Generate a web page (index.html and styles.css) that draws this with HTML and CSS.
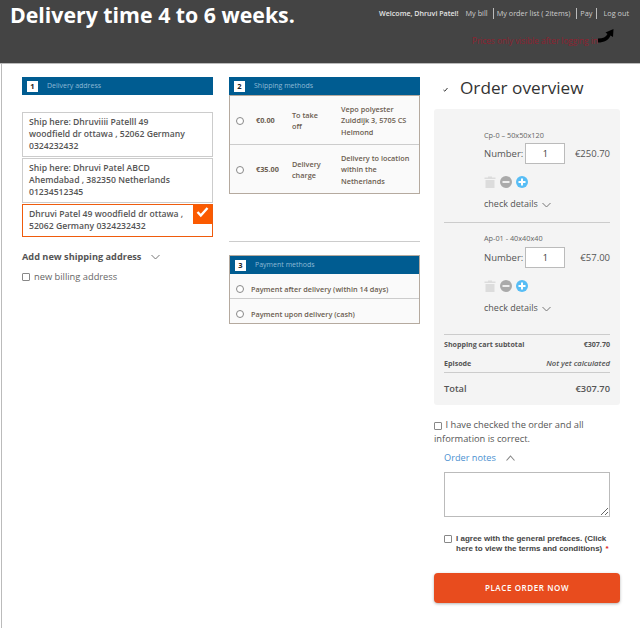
FILE: index.html
```html
<!DOCTYPE html>
<html lang="en">
<head>
    <meta charset="UTF-8">
    <title>Checkout</title>
    <link rel="stylesheet" href="styles.css">
</head>
<body>
<header class="topbar">
    <h1 class="delivery-time">Delivery time 4 to 6 weeks.</h1>
    <div class="topbar-right">
        <nav class="user-nav">
            <span class="welcome">Welcome, Dhruvi Patel!</span>
            <a class="nav-first">My bill</a>
            <a class="nav-sep">My order list ( 2items)</a>
            <a class="nav-sep nav-pay">Pay</a>
            <a class="nav-sep nav-out">Log out</a>
        </nav>
        <div class="price-note">
            <span>Prices only visible after logging in</span>
            <svg class="arrow" width="16" height="14" viewBox="0 0 16 14"><path d="M0 9.500C5 9.500 8 8 9.500 5L7.500 3.500L15.500 0L15 8L12.500 6.500C11 11 6 13.500 0 13.500Z" fill="#000"/></svg>
        </div>
    </div>
</header>

<main class="page">
    <section class="col col-address">
        <div class="step-head"><span class="step-num">1</span>Delivery address</div>
        <div class="address-list">
            <div class="address">Ship here: Dhruviiii Patelll 49<br>woodfield dr ottawa , 52062 Germany<br>0324232432</div>
            <div class="address">Ship here: Dhruvi Patel ABCD<br>Ahemdabad , 382350 Netherlands<br>01234512345</div>
            <div class="address address-active">Dhruvi Patel 49 woodfield dr ottawa ,<br>52062 Germany 0324232432
                <span class="address-check">
                    <svg width="13" height="11" viewBox="0 0 13 11"><path d="M1.500 5L4.800 8.500L11.500 1" fill="none" stroke="#fff" stroke-width="2.400"/></svg>
                </span>
            </div>
        </div>
        <div class="add-new">Add new shipping address
            <svg class="chev" width="9" height="6" viewBox="0 0 9 6"><path d="M.5 1L4.500 5L8.500 1" fill="none" stroke="#777"/></svg>
        </div>
        <label class="billing"><span class="box"></span>new billing address</label>
    </section>

    <section class="col col-methods">
        <div class="step-head"><span class="step-num">2</span>Shipping methods</div>
        <div class="ship-box">
            <div class="ship-row">
                <span class="radio"></span>
                <span class="ship-price">€0.00</span>
                <span class="ship-name">To take<br>off</span>
                <span class="ship-desc">Vepo polyester Zuiddijk 3, 5705 CS Helmond</span>
            </div>
            <div class="ship-row">
                <span class="radio"></span>
                <span class="ship-price">€35.00</span>
                <span class="ship-name">Delivery<br>charge</span>
                <span class="ship-desc">Delivery to location within the Netherlands</span>
            </div>
        </div>
        <hr class="methods-rule">
        <div class="pay-box">
            <div class="step-head"><span class="step-num">3</span>Payment methods</div>
            <div class="pay-row"><span class="radio"></span>Payment after delivery (within 14 days)</div>
            <div class="pay-row"><span class="radio"></span>Payment upon delivery (cash)</div>
        </div>
    </section>

    <section class="col col-order">
        <h2 class="order-title">
            <svg class="order-tick" width="5" height="5" viewBox="0 0 5 5"><path d="M.5 3L1.800 4.200L4.500 1" fill="none" stroke="#333"/></svg>
            Order overview
        </h2>
        <div class="order-panel">
            <div class="item">
                <div class="item-code">Cp-0 – 50x50x120</div>
                <div class="item-line">
                    <span>Number:</span>
                    <span class="qty">1</span>
                    <span class="item-price">€250.70</span>
                </div>
                <div class="item-icons">
                    <svg width="12" height="12" viewBox="0 0 12 12"><path d="M4 1.500V.5H8V1.500H11.500V3H.5V1.500ZM1.500 4H10.500V12H1.500Z" fill="#dcdcdc"/></svg>
                    <svg width="12" height="12" viewBox="0 0 12 12"><circle cx="6" cy="6" r="6" fill="#aaa"/><rect x="2.500" y="5" width="7" height="2" fill="#eee"/></svg>
                    <svg width="12" height="12" viewBox="0 0 12 12"><circle cx="6" cy="6" r="6" fill="#57bdf5"/><path d="M2.500 5H5V2.500H7V5H9.500V7H7V9.500H5V7H2.500Z" fill="#fff"/></svg>
                </div>
                <div class="item-details">check details
                    <svg class="chev" width="9" height="6" viewBox="0 0 9 6"><path d="M.5 1L4.500 5L8.500 1" fill="none" stroke="#777"/></svg>
                </div>
            </div>
            <div class="item item-last">
                <div class="item-code">Ap-01 - 40x40x40</div>
                <div class="item-line">
                    <span>Number:</span>
                    <span class="qty">1</span>
                    <span class="item-price">€57.00</span>
                </div>
                <div class="item-icons">
                    <svg width="12" height="12" viewBox="0 0 12 12"><path d="M4 1.500V.5H8V1.500H11.500V3H.5V1.500ZM1.500 4H10.500V12H1.500Z" fill="#dcdcdc"/></svg>
                    <svg width="12" height="12" viewBox="0 0 12 12"><circle cx="6" cy="6" r="6" fill="#aaa"/><rect x="2.500" y="5" width="7" height="2" fill="#eee"/></svg>
                    <svg width="12" height="12" viewBox="0 0 12 12"><circle cx="6" cy="6" r="6" fill="#57bdf5"/><path d="M2.500 5H5V2.500H7V5H9.500V7H7V9.500H5V7H2.500Z" fill="#fff"/></svg>
                </div>
                <div class="item-details">check details
                    <svg class="chev" width="9" height="6" viewBox="0 0 9 6"><path d="M.5 1L4.500 5L8.500 1" fill="none" stroke="#777"/></svg>
                </div>
            </div>
            <div class="totals">
                <div class="total-row"><b>Shopping cart subtotal</b><b>€307.70</b></div>
                <div class="total-row"><b>Episode</b><em>Not yet calculated</em></div>
            </div>
            <div class="grand-total"><span>Total</span><span>€307.70</span></div>
        </div>

        <label class="confirm"><span class="box box-inline"></span> I have checked the order and all information is correct.</label>
        <div class="notes-toggle">Order notes
            <svg width="9" height="6" viewBox="0 0 9 6"><path d="M.5 5.500L4.500 1L8.500 5.500" fill="none" stroke="#888" stroke-width="1.100"/></svg>
        </div>
        <textarea class="notes"></textarea>
        <label class="agree"><span class="box"></span><span>I agree with the general prefaces. (Click here to view the terms and conditions) <i>*</i></span></label>
        <button class="place-order">PLACE ORDER NOW</button>
    </section>
</main>
</body>
</html>
```

FILE: styles.css
```css
* {
    box-sizing: border-box;
}
html, body {
    height: 100%;
}
body {
    margin: 0;
    font-family: "Open Sans", Arial, sans-serif;
    color: #444;
    background-color: #fff;
    overflow: hidden;
}
.topbar {
    height: 64px;
    background-color: #444;
    border-bottom: 1px solid #bbb;
    display: flex;
    justify-content: space-between;
    padding: 0 11px 0 10px;
}
.delivery-time {
    margin: 0;
    font-size: 21.300px;
    line-height: 30px;
    font-weight: 700;
    color: #fff;
}
.topbar-right {
    display: flex;
    flex-direction: column;
    align-items: flex-end;
}
.user-nav {
    display: flex;
    margin-top: 8px;
    font-size: 7.300px;
    line-height: 11px;
    color: #ccc;
    white-space: nowrap;
}
.welcome {
    color: #e4e4e4;
    font-size: 7.100px;
    font-weight: 600;
    margin-right: 7px;
}
.nav-sep {
    border-left: 1px solid #bbb;
    padding-left: 3px;
    margin-left: 5px;
}
.nav-pay {
    margin-left: 6px;
}
.nav-out {
    margin-left: 4px;
    padding-left: 6px;
}
.price-note {
    display: flex;
    align-items: flex-end;
    margin-top: 10px;
    margin-right: 15px;
    font-size: 8.200px;
    line-height: 11px;
    color: #8e2230;
    white-space: nowrap;
}
.arrow {
    margin-bottom: 3px;
}
.page {
    height: 564px;
    display: flex;
    margin-left: 1px;
    border-left: 1px solid #bbb;
    padding: 13px 0 0 20px;
}
.col {
    width: 191px;
}
.col-methods {
    margin-left: 16px;
}
.col-order {
    margin-left: 14px;
    width: 186px;
}
.step-head {
    height: 18px;
    background-color: #005c91;
    color: #8dbad6;
    font-size: 7px;
    line-height: 18px;
    display: flex;
    align-items: center;
    padding-left: 5px;
}
.step-num {
    width: 11px;
    height: 11px;
    margin-right: 9px;
    background-color: #fff;
    color: #222;
    font-size: 7.500px;
    font-weight: 700;
    line-height: 11px;
    text-align: center;
}
.address-list {
    margin-top: 17px;
}
.address {
    position: relative;
    width: 191px;
    margin-bottom: 1px;
    padding: 3px 6px 4px 6px;
    border: 1px solid #ccc;
    font-size: 8.650px;
    font-weight: 600;
    line-height: 12px;
    color: #555;
}
.address-active {
    border-color: #ef5b0c;
}
.address-check {
    position: absolute;
    top: 0;
    right: 0;
    width: 19px;
    height: 19px;
    background-color: #fb5a00;
    display: flex;
    justify-content: center;
    padding-top: 2px;
}
.add-new {
    margin-top: 13px;
    font-size: 9.200px;
    font-weight: 700;
    line-height: 14px;
    color: #555;
    display: flex;
    align-items: center;
}
.add-new .chev {
    margin-left: 10px;
}
.billing {
    display: flex;
    align-items: center;
    margin-top: 6px;
    font-size: 9.300px;
    line-height: 13px;
    color: #666;
}
.box {
    flex: none;
    display: inline-block;
    width: 8px;
    height: 8px;
    margin-right: 4px;
    background-color: #fff;
    border: 1px solid #888;
    border-radius: 1px;
}
.ship-box {
    border: 1px solid #b5aa9f;
    background-color: #fafafa;
}
.ship-row {
    display: flex;
    align-items: center;
    height: 48px;
    padding: 2px 0 0 6px;
    font-size: 7.300px;
    font-weight: 600;
    line-height: 11.500px;
    color: #6b5d50;
}
.ship-row + .ship-row {
    height: 49px;
    border-top: 1px solid #ccc;
}
.radio {
    flex: none;
    width: 8px;
    height: 8px;
    border: 1px solid #888;
    border-radius: 50%;
    background-color: #fff;
}
.ship-price {
    width: 36px;
    margin-left: 12px;
    flex: none;
    font-weight: 700;
}
.ship-name {
    width: 49px;
    flex: none;
}
.ship-desc {
    flex: 1;
    padding-right: 6px;
}
.methods-rule {
    margin: 47px 0 13px;
    border: none;
    border-top: 1px solid #ccc;
}
.pay-box {
    border: 1px solid #b5aa9f;
    background-color: #fafafa;
}
.pay-row {
    display: flex;
    align-items: center;
    height: 24px;
    padding: 5px 0 0 6px;
    font-size: 7.300px;
    font-weight: 600;
    color: #6b5d50;
    white-space: nowrap;
}
.pay-row + .pay-row {
    height: 25px;
    border-top: 1px solid #ccc;
}
.pay-row .radio {
    margin-right: 7px;
}
.order-title {
    margin: 0;
    height: 32px;
    font-size: 17.200px;
    font-weight: 400;
    line-height: 22px;
    color: #333;
    display: flex;
    align-items: center;
    padding-bottom: 10px;
}
.order-tick {
    margin: 3px 12px 0 9px;
}
.order-panel {
    height: 296px;
    padding: 0 10px;
    background-color: #f4f4f4;
    border-radius: 3px;
}
.item {
    height: 114px;
    padding: 21px 0 0 40px;
    border-bottom: 1px solid #ccc;
}
.item-last {
    height: 112px;
    padding-top: 10px;
}
.item-last .item-line {
    margin-top: 4px;
}
.item-code {
    font-size: 7.300px;
    line-height: 10px;
    color: #666;
}
.item-line {
    display: flex;
    align-items: center;
    margin-top: 3px;
    font-size: 9.500px;
    color: #555;
}
.qty {
    width: 40px;
    height: 21px;
    margin-left: 2px;
    background-color: #fff;
    border: 1px solid #bbb;
    font-size: 9px;
    line-height: 19px;
    text-align: center;
    color: #333;
}
.item-price {
    margin-left: auto;
}
.item-icons {
    display: flex;
    align-items: center;
    gap: 4px;
    margin-top: 11px;
    height: 14px;
}
.item-details {
    margin-top: 8px;
    font-size: 9px;
    line-height: 14px;
    color: #555;
    display: flex;
    align-items: center;
}
.item-details .chev {
    margin-left: 4px;
    margin-top: 2px;
}
.totals {
    height: 38px;
    border-bottom: 1px solid #ccc;
    padding-top: 3px;
}
.total-row {
    display: flex;
    justify-content: space-between;
    height: 19px;
    font-size: 7.100px;
    line-height: 12px;
    color: #555;
}
.total-row em {
    font-size: 7.700px;
    font-weight: 600;
}
.grand-total {
    display: flex;
    justify-content: space-between;
    padding-top: 9px;
    font-size: 9.300px;
    font-weight: 600;
    line-height: 14px;
    color: #555;
}
.confirm {
    display: block;
    margin-top: 13px;
    font-size: 9.300px;
    line-height: 14px;
    color: #555;
}
.box-inline {
    margin: 0 1px 0 0;
    vertical-align: -2px;
}
.notes-toggle {
    margin: 5px 0 0 10px;
    font-size: 9.200px;
    line-height: 14px;
    color: #4a90d0;
    display: flex;
    align-items: center;
    gap: 10px;
}
.notes {
    display: block;
    width: 166px;
    height: 45px;
    margin: 7px 0 0 10px;
    background-color: #fff;
    border: 1px solid #bbb;
    outline: none;
}
.agree {
    display: flex;
    margin: 17px 8px 0 10px;
    font-family: "Liberation Sans", Arial, sans-serif;
    font-size: 8px;
    font-weight: 700;
    line-height: 10px;
    color: #444;
}
.agree .box {
    margin-top: 1px;
    margin-right: 4px;
}
.agree i {
    color: #d22;
    font-style: normal;
    margin-left: 1px;
}
.place-order {
    display: block;
    width: 186px;
    height: 30px;
    margin-top: 19px;
    padding-bottom: 2px;
    border: none;
    border-radius: 4px;
    background-color: #e84c1e;
    box-shadow: 0 1px 3px rgba(0, 0, 0, 0.3);
    color: #fff;
    font-family: "Open Sans", Arial, sans-serif;
    font-size: 8px;
    font-weight: 600;
    letter-spacing: 0.6px;
}
```
